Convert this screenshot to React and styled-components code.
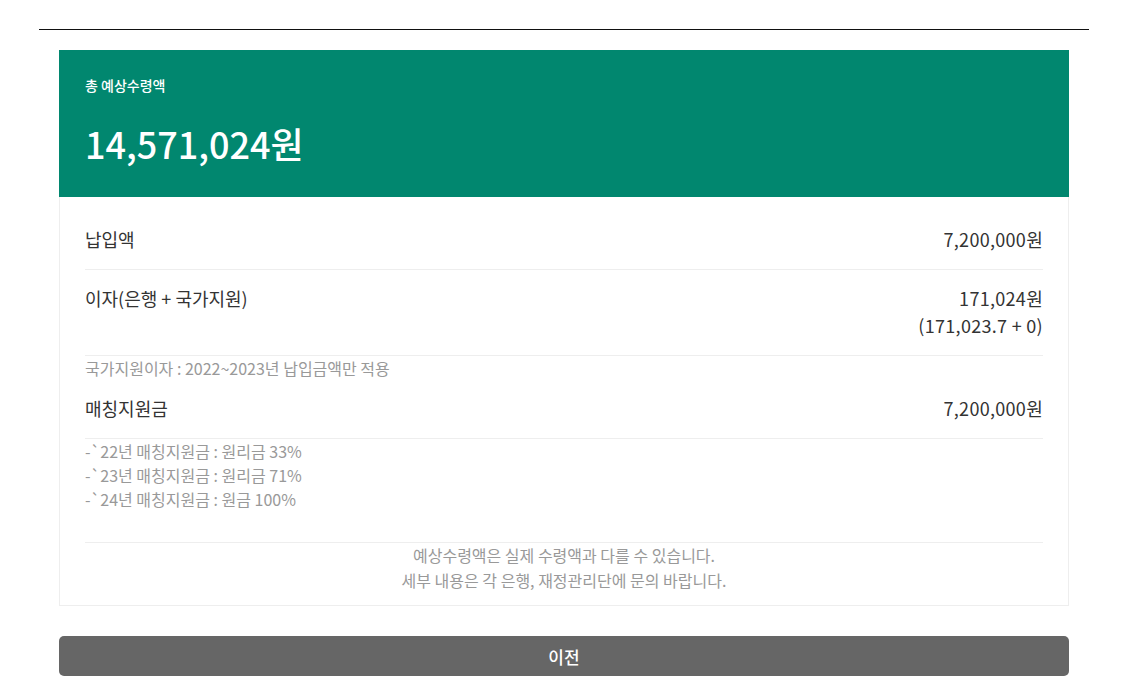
import React from "react";
import styled, { createGlobalStyle } from "styled-components";

const GlobalStyle = createGlobalStyle`
    body {
        margin: 0;
        background: #fff;
        font-family: "Noto Sans CJK KR", "Noto Sans", sans-serif;
        color: #333;
    }
`;

const rows = [
    { label: "납입액", value: ["7,200,000원"] },
    {
        label: "이자(은행 + 국가지원)",
        value: ["171,024원", "(171,023.7 + 0)"],
        notes: ["국가지원이자 : 2022~2023년 납입금액만 적용"],
    },
    {
        label: "매칭지원금",
        value: ["7,200,000원"],
        notes: [
            "-`22년 매칭지원금 : 원리금 33%",
            "-`23년 매칭지원금 : 원리금 71%",
            "-`24년 매칭지원금 : 원금 100%",
        ],
    },
];

function App() {
    return (
        <Page>
            <GlobalStyle />
            <Result>
                <Summary>
                    <SummaryLabel>총 예상수령액</SummaryLabel>
                    <Total>14,571,024원</Total>
                </Summary>
                <Detail>
                    {rows.map((row) => (
                        <React.Fragment key={row.label}>
                            <Row>
                                <Label>{row.label}</Label>
                                <Value>
                                    {row.value.map((v) => (
                                        <div key={v}>{v}</div>
                                    ))}
                                </Value>
                            </Row>
                            {row.notes && (
                                <Notes>
                                    {row.notes.map((n) => (
                                        <li key={n}>{n}</li>
                                    ))}
                                </Notes>
                            )}
                        </React.Fragment>
                    ))}
                    <Notice>
                        예상수령액은 실제 수령액과 다를 수 있습니다.
                        <br />
                        세부 내용은 각 은행, 재정관리단에 문의 바랍니다.
                    </Notice>
                </Detail>
                <PrevButton>이전</PrevButton>
            </Result>
        </Page>
    );
}

const Page = styled.div`
    width: 1050px;
    margin-left: 39px;
    padding-top: 29px;
`;

const Result = styled.section`
    border-top: 1px solid #111;
    padding: 20px 20px 16px;
`;

const Summary = styled.div`
    background: #01876f;
    color: #fff;
    padding: 25px 26px 30px;
`;

const SummaryLabel = styled.div`
    font-size: 14px;
    font-weight: 500;
    line-height: 20px;
`;

const Total = styled.div`
    margin-top: 24px;
    font-size: 36px;
    font-weight: 500;
    line-height: 48px;
`;

const Detail = styled.div`
    border: 1px solid #eee;
    border-top: none;
    padding: 14px 25px 12px;
`;

const Row = styled.div`
    display: flex;
    justify-content: space-between;
    align-items: flex-start;
    padding: 15px 0 16px;
    border-bottom: 1px solid #eee;
    font-size: 18px;
    line-height: 27px;
    color: #333;
`;

const Label = styled.div``;

const Value = styled.div`
    text-align: right;
    letter-spacing: 0.3px;
`;

const Notes = styled.ul`
    list-style: none;
    margin: 0;
    padding: 0;
    font-size: 16px;
    line-height: 24px;
    color: #999;
    &:last-of-type {
        padding-bottom: 31px;
    }
`;

const Notice = styled.p`
    margin: 0;
    border-top: 1px solid #eee;
    text-align: center;
    font-size: 16px;
    line-height: 25px;
    color: #999;
`;

const PrevButton = styled.button`
    display: block;
    width: 100%;
    height: 40px;
    margin-top: 30px;
    border: none;
    border-radius: 5px;
    background: #666;
    color: #fff;
    font-family: inherit;
    font-size: 17px;
    font-weight: 500;
    cursor: pointer;
`;

export default App;
